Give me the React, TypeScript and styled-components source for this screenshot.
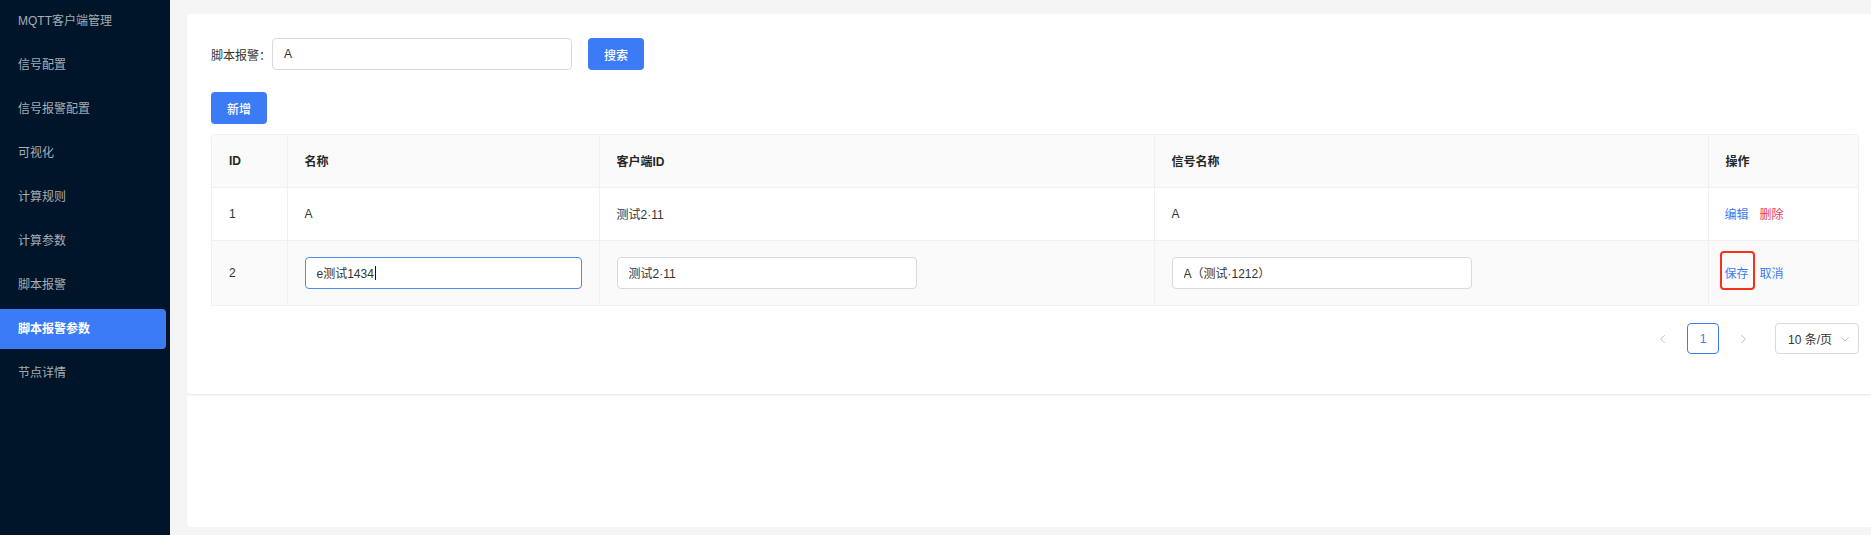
import React from "react";
import styled, { createGlobalStyle } from "styled-components";

const GlobalStyle = createGlobalStyle`
  html, body { margin: 0; padding: 0; }
  body {
    font-family: "Liberation Sans", "Noto Sans CJK SC", sans-serif;
    font-size: 12px;
    color: #333;
    background: #f5f5f5;
  }
  *, *::before, *::after { box-sizing: border-box; }
`;

const Layout = styled.div`
  display: flex;
  width: 1871px;
  height: 535px;
  overflow: hidden;
`;

const Sidebar = styled.nav`
  width: 170px;
  flex: none;
  background: #001529;
  padding-top: 1px;
  display: flex;
  flex-direction: column;
  gap: 4px;
`;

const NavItem = styled.div<{ $active?: boolean }>`
  height: 40px;
  display: flex;
  align-items: center;
  padding-left: 18px;
  padding-bottom: 1px;
  margin-right: 4px;
  border-radius: 0 4px 4px 0;
  font-size: 12px;
  line-height: 16px;
  color: ${(p) => (p.$active ? "#ffffff" : "rgba(255,255,255,0.66)")};
  background: ${(p) => (p.$active ? "#3b7cf6" : "transparent")};
  font-weight: ${(p) => (p.$active ? 600 : 400)};
`;

const Main = styled.main`
  flex: 1;
  min-width: 0;
  display: flex;
  flex-direction: column;
  gap: 1px;
  padding: 14px 0 8px 17px;
  background: #f5f5f5;
`;

const Card = styled.section`
  background: #fff;
  border-radius: 4px 0 0 4px;
  border-bottom: 1px solid #ececec;
  padding: 24px 12px 40px 24px;
  width: 1696px;
  flex: none;
`;

const BlankCard = styled.section`
  flex: 1;
  background: #fff;
  border-radius: 0 0 0 4px;
  width: 1696px;
`;

const SearchRow = styled.div`
  display: flex;
  align-items: center;
  height: 32px;
`;

const Label = styled.label`
  width: 61px;
  color: #333;
  font-size: 12px;
  white-space: nowrap;
`;

const TextInput = styled.input<{ $width?: string }>`
  width: ${(p) => p.$width ?? "300px"};
  height: 32px;
  border: 1px solid #d9d9d9;
  border-radius: 4px;
  padding: 0 11px;
  font-family: inherit;
  font-size: 12px;
  color: #333;
  background: #fff;
  outline: none;
`;

const FocusedInput = styled.div`
  width: 100%;
  height: 32px;
  border: 1px solid #4b8bf5;
  border-radius: 4px;
  padding: 0 11px;
  display: flex;
  align-items: center;
  font-size: 12px;
  color: #333;
  background: #fff;
`;

const Caret = styled.span`
  display: inline-block;
  width: 1px;
  height: 14px;
  background: #111;
  margin-left: 1px;
`;

const PrimaryButton = styled.button<{ $ml?: string }>`
  width: 56px;
  height: 32px;
  margin-left: ${(p) => p.$ml ?? "0"};
  border: none;
  border-radius: 4px;
  background: #3b7cf6;
  color: #fff;
  font-family: inherit;
  font-size: 12px;
  font-weight: 500;
  cursor: pointer;
`;

const ToolRow = styled.div`
  margin-top: 22px;
  margin-bottom: 10px;
`;

const TableWrap = styled.div`
  width: 1648px;
  border: 1px solid #f0f0f0;
  border-radius: 4px 4px 0 0;
  overflow: hidden;
`;

const Table = styled.table`
  width: 100%;
  border-collapse: collapse;
  table-layout: fixed;
`;

const HeadCell = styled.th`
  height: 52px;
  padding: 0 17px;
  text-align: left;
  font-weight: 600;
  font-size: 12px;
  color: #262626;
  background: #fafafa;
  border-right: 1px solid #f0f0f0;
  border-bottom: 1px solid #f0f0f0;
  &:last-child { border-right: none; }
`;

const Row = styled.tr<{ $tall?: boolean; $shaded?: boolean }>`
  height: ${(p) => (p.$tall ? "65px" : "53px")};
  background: ${(p) => (p.$shaded ? "#fafafa" : "#fff")};
  &:last-child td { border-bottom: none; }
`;

const Cell = styled.td`
  padding: 0 17px;
  font-size: 12px;
  color: #333;
  border-right: 1px solid #f0f0f0;
  border-bottom: 1px solid #f0f0f0;
  &:last-child { border-right: none; padding-left: 16px; }
`;

const Actions = styled.div`
  display: flex;
  align-items: center;
  gap: 11px;
`;

const LinkAction = styled.a<{ $danger?: boolean }>`
  color: ${(p) => (p.$danger ? "#e8395c" : "#3b7cf6")};
  font-size: 12px;
  text-decoration: none;
  cursor: pointer;
`;

const Highlighted = styled.span`
  position: relative;
  display: inline-block;
  &::after {
    content: "";
    position: absolute;
    left: -5px;
    width: 35px;
    top: 50%;
    margin-top: -22px;
    height: 39px;
    border: 2px solid #f5321c;
    border-radius: 4px;
    pointer-events: none;
  }
`;

const Pagination = styled.div`
  width: 1648px;
  margin-top: 17px;
  display: flex;
  justify-content: flex-end;
  align-items: center;
`;

const PageArrow = styled.span<{ $mr?: string }>`
  width: 32px;
  height: 31px;
  display: flex;
  align-items: center;
  justify-content: center;
  margin-right: ${(p) => p.$mr ?? "0"};
`;

const PageItem = styled.span`
  width: 32px;
  height: 31px;
  display: flex;
  align-items: center;
  justify-content: center;
  border: 1px solid #3b7cf6;
  border-radius: 4px;
  color: #3b7cf6;
  font-size: 12px;
  margin-right: 8px;
`;

const SizeSelect = styled.div`
  width: 84px;
  height: 31px;
  display: flex;
  align-items: center;
  justify-content: space-between;
  padding: 0 8px 0 12px;
  border: 1px solid #d9d9d9;
  border-radius: 4px;
  font-size: 12px;
  color: #333;
`;

const Chevron = ({ dir }: { dir: "left" | "right" | "down" }) => {
  const d =
    dir === "left" ? "M6.5 1.5 L2.5 5 L6.5 8.5" : dir === "right" ? "M3.5 1.5 L7.5 5 L3.5 8.5" : "M1.5 3.5 L5 7 L8.5 3.5";
  return (
    <svg width="10" height="10" viewBox="0 0 10 10" fill="none">
      <path d={d} stroke="#c4c4c4" strokeWidth="1" strokeLinecap="round" strokeLinejoin="round" />
    </svg>
  );
};

const navItems = [
  "MQTT客户端管理",
  "信号配置",
  "信号报警配置",
  "可视化",
  "计算规则",
  "计算参数",
  "脚本报警",
  "脚本报警参数",
  "节点详情",
];

export default function App() {
  return (
    <>
      <GlobalStyle />
      <Layout>
        <Sidebar>
          {navItems.map((n) => (
            <NavItem key={n} $active={n === "脚本报警参数"}>
              {n}
            </NavItem>
          ))}
        </Sidebar>
        <Main>
          <Card>
            <SearchRow>
              <Label>脚本报警：</Label>
              <TextInput defaultValue="A" />
              <PrimaryButton $ml="16px">搜索</PrimaryButton>
            </SearchRow>
            <ToolRow>
              <PrimaryButton>新增</PrimaryButton>
            </ToolRow>
            <TableWrap>
              <Table>
                <colgroup>
                  <col style={{ width: 75 }} />
                  <col style={{ width: 312 }} />
                  <col style={{ width: 555 }} />
                  <col style={{ width: 554 }} />
                  <col />
                </colgroup>
                <thead>
                  <tr>
                    <HeadCell>ID</HeadCell>
                    <HeadCell>名称</HeadCell>
                    <HeadCell>客户端ID</HeadCell>
                    <HeadCell>信号名称</HeadCell>
                    <HeadCell>操作</HeadCell>
                  </tr>
                </thead>
                <tbody>
                  <Row>
                    <Cell>1</Cell>
                    <Cell>A</Cell>
                    <Cell>测试2·11</Cell>
                    <Cell>A</Cell>
                    <Cell>
                      <Actions>
                        <LinkAction>编辑</LinkAction>
                        <LinkAction $danger>删除</LinkAction>
                      </Actions>
                    </Cell>
                  </Row>
                  <Row $tall $shaded>
                    <Cell>2</Cell>
                    <Cell>
                      <FocusedInput>
                        e测试1434
                        <Caret />
                      </FocusedInput>
                    </Cell>
                    <Cell>
                      <TextInput defaultValue="测试2·11" />
                    </Cell>
                    <Cell>
                      <TextInput defaultValue="A（测试·1212）" />
                    </Cell>
                    <Cell>
                      <Actions>
                        <Highlighted>
                          <LinkAction>保存</LinkAction>
                        </Highlighted>
                        <LinkAction>取消</LinkAction>
                      </Actions>
                    </Cell>
                  </Row>
                </tbody>
              </Table>
            </TableWrap>
            <Pagination>
              <PageArrow $mr="8px">
                <Chevron dir="left" />
              </PageArrow>
              <PageItem>1</PageItem>
              <PageArrow $mr="16px">
                <Chevron dir="right" />
              </PageArrow>
              <SizeSelect>
                <span>10 条/页</span>
                <Chevron dir="down" />
              </SizeSelect>
            </Pagination>
          </Card>
          <BlankCard />
        </Main>
      </Layout>
    </>
  );
}
